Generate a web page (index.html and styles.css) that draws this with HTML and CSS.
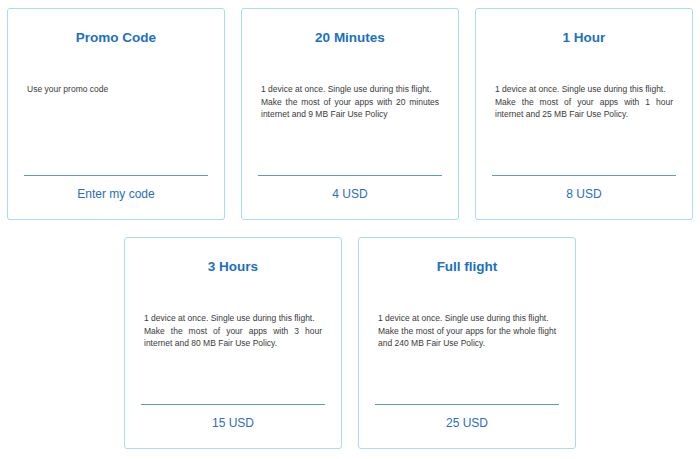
FILE: index.html
```html
<!DOCTYPE html>
<html lang="en">
<head>
  <meta charset="UTF-8" />
  <meta name="viewport" content="width=device-width, initial-scale=1.0"/>
  <title>Wi-Fi Passes</title>
  <link rel="stylesheet" href="styles.css">
</head>
<body>
  <div class="passes">
    <div class="pass">
      <h2>Promo Code</h2>
      <p class="desc">Use your promo code</p>
      <div class="price">Enter my code</div>
    </div>
    <div class="pass">
      <h2>20 Minutes</h2>
      <p class="desc">1 device at once. Single use during this flight.<br>Make the most of your apps with 20 minutes internet and 9 MB Fair Use Policy</p>
      <div class="price">4 USD</div>
    </div>
    <div class="pass">
      <h2>1 Hour</h2>
      <p class="desc">1 device at once. Single use during this flight.<br>Make the most of your apps with 1 hour internet and 25 MB Fair Use Policy.</p>
      <div class="price">8 USD</div>
    </div>
    <div class="pass">
      <h2>3 Hours</h2>
      <p class="desc">1 device at once. Single use during this flight.<br>Make the most of your apps with 3 hour internet and 80 MB Fair Use Policy.</p>
      <div class="price">15 USD</div>
    </div>
    <div class="pass">
      <h2>Full flight</h2>
      <p class="desc">1 device at once. Single use during this flight.<br>Make the most of your apps for the whole flight and 240 MB Fair Use Policy.</p>
      <div class="price">25 USD</div>
    </div>
  </div>
</body>
</html>
```

FILE: styles.css
```css
body { margin: 0; padding: 8px 0; background: #fff; font-family: "Liberation Sans", Arial, sans-serif; }
.passes { width: 686px; margin: 0 auto; display: flex; flex-wrap: wrap; justify-content: center; gap: 17px 16px; }
.pass { width: 218px; height: 212px; box-sizing: border-box; border: 1px solid #a9dcf0; border-radius: 3px; display: flex; flex-direction: column; padding: 20px 0 0; }
.pass h2 { margin: 0; text-align: center; font-size: 13.5px; line-height: 17px; font-weight: bold; color: #1b70c2; }
.desc { margin: 37px 19px 0; font-size: 8.5px; line-height: 12.5px; color: #3a3a3a; text-align: justify; }
.price { margin: auto 16px 0; border-top: 1px solid #5b98d6; padding: 10px 0 17px; text-align: center; font-size: 12px; line-height: 16px; color: #2a6dbf; }
```
